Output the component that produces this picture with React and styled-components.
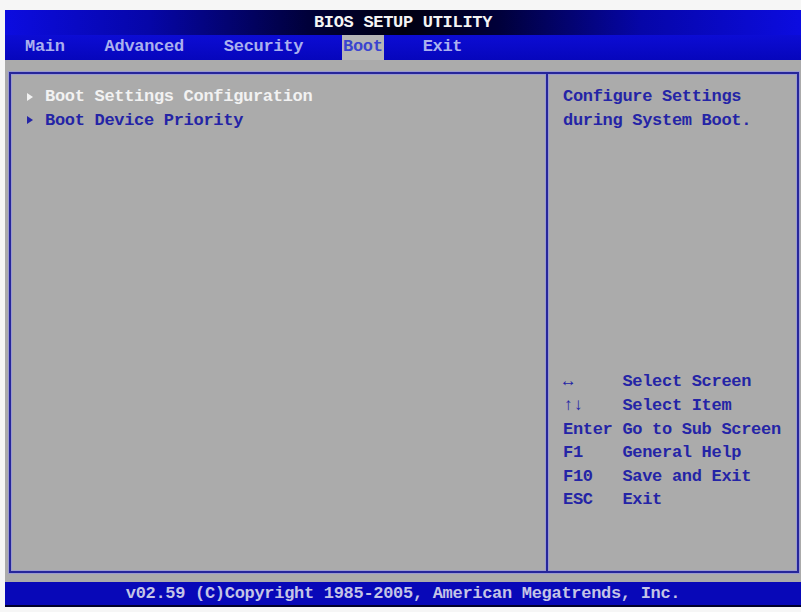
import React from 'react'
import styled, { createGlobalStyle } from 'styled-components'

const GlobalStyle = createGlobalStyle`
  html, body {
    margin: 0;
    padding: 0;
    background: #f6f6f6;
  }
  * {
    box-sizing: border-box;
  }
`

const Screen = styled.div`
  width: 796px;
  height: 597px;
  margin: 10px 0 0 5px;
  display: flex;
  flex-direction: column;
  font-family: "Liberation Mono", "DejaVu Sans Mono", monospace;
  font-weight: bold;
  font-size: 17px;
  letter-spacing: -0.3px;
  background: #ababab;
`

const Header = styled.div`
  height: 50px;
  display: flex;
  flex-direction: column;
  background: #0a0ac4;
`

const TitleBar = styled.div`
  height: 25px;
  display: flex;
  align-items: center;
  justify-content: center;
  color: #f4f4f4;
  background: linear-gradient(90deg, #0c0ce0 0%, #0606a8 18%, #00003a 38%, #000010 50%, #00003a 62%, #0606a8 80%, #0c0ce0 100%);
`

const MenuBar = styled.div`
  flex: 1;
  display: flex;
  align-items: stretch;
  gap: 38px;
  padding-left: 19px;
  background: linear-gradient(180deg, #0c0cd4 0%, #0606bc 100%);
`

const MenuItem = styled.div`
  display: flex;
  align-items: center;
  padding: 0 1px 2px;
  color: ${p => (p.active ? '#3a44d0' : '#aab0ee')};
  background: ${p => (p.active ? '#b6b6b6' : 'transparent')};
`

const Body = styled.div`
  flex: 1;
  display: flex;
  padding: 12px 2px 9px 4px;
`

const Frame = styled.div`
  flex: 1;
  display: flex;
  border: 2px solid #26269a;
  box-shadow: 0 0 0 1px #9a9ad0, inset 0 0 0 1px #9a9ad0;
`

const ItemsPanel = styled.div`
  flex: 1;
  padding: 11px 14px;
  line-height: 23.6px;
`

const Item = styled.div`
  display: flex;
  align-items: center;
  color: ${p => (p.selected ? '#f2f2f2' : '#2424a6')};
`

/* small solid right-pointing triangle before each submenu entry */
const Pointer = styled.span`
  width: 0;
  height: 0;
  margin: 0 12px 0 2px;
  border-top: 4.5px solid transparent;
  border-bottom: 4.5px solid transparent;
  border-left: 6px solid currentColor;
`

const HelpPanel = styled.div`
  width: 251px;
  display: flex;
  flex-direction: column;
  justify-content: space-between;
  padding: 11px 0 59px 15px;
  border-left: 2px solid #26269a;
  box-shadow: inset 1px 0 0 #9a9ad0, -1px 0 0 #9a9ad0;
  color: #2424a6;
  line-height: 23.6px;
`

const KeyList = styled.div`
  display: grid;
  grid-template-columns: 59.4px 1fr;
  white-space: nowrap;
`

const Footer = styled.div`
  height: 25px;
  display: flex;
  align-items: center;
  justify-content: center;
  color: #c4c4e6;
  background: #0808b8;
  border-bottom: 2px solid #00002a;
`

const menus = ['Main', 'Advanced', 'Security', 'Boot', 'Exit']

const keys = [
  ['↔', 'Select Screen'],
  ['↑↓', 'Select Item'],
  ['Enter', 'Go to Sub Screen'],
  ['F1', 'General Help'],
  ['F10', 'Save and Exit'],
  ['ESC', 'Exit'],
]

const App = () => (
  <>
    <GlobalStyle />
    <Screen>
      <Header>
        <TitleBar>BIOS SETUP UTILITY</TitleBar>
        <MenuBar>
          {menus.map(m => (
            <MenuItem key={m} active={m === 'Boot'}>{m}</MenuItem>
          ))}
        </MenuBar>
      </Header>
      <Body>
        <Frame>
          <ItemsPanel>
            <Item selected><Pointer />Boot Settings Configuration</Item>
            <Item><Pointer />Boot Device Priority</Item>
          </ItemsPanel>
          <HelpPanel>
            <div>
              Configure Settings<br />
              during System Boot.
            </div>
            <KeyList>
              {keys.map(([k, v]) => (
                <React.Fragment key={k}>
                  <span>{k}</span>
                  <span>{v}</span>
                </React.Fragment>
              ))}
            </KeyList>
          </HelpPanel>
        </Frame>
      </Body>
      <Footer>v02.59 (C)Copyright 1985-2005, American Megatrends, Inc.</Footer>
    </Screen>
  </>
)

export default App
